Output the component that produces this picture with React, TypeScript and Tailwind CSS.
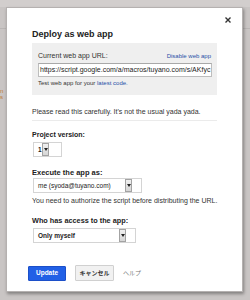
import React from 'react';

const font = { fontFamily: '"Liberation Sans", Arial, "Noto Sans CJK JP", sans-serif' };

const Arrow: React.FC = () => (
  <svg width="4" height="3" viewBox="0 0 4 3">
    <path d="M0 0 L4 0 L2 3 Z" fill="#222" />
  </svg>
);

const Select: React.FC<{ box: string; text: string; label: string; bold?: boolean }> = ({ box, text, label, bold }) => (
  <div className={`ml-[1px] flex h-[15px] border border-[#d4d4d4] bg-white ${box}`}>
    <span className={`${text} pl-[4px] text-[6.5px] leading-[13px] whitespace-nowrap text-[#222] ${bold ? 'font-bold' : ''}`}>
      {label}
    </span>
    <div className="flex w-[7px] items-center justify-center border border-[#a3a3a3] bg-gradient-to-b from-[#f0f0f0] to-[#d6d6d6]">
      <Arrow />
    </div>
  </div>
);

export default function App() {
  return (
    <div className="relative h-[300px] w-[250px] overflow-hidden bg-[#c9c5c4]" style={font}>
      {/* page behind the dialog */}
      <div className="absolute left-0 top-0 h-[7px] w-full bg-[#d2cecd]" />
      <div className="absolute left-0 top-[28px] h-[1px] w-full bg-[#b9b5b4]" />
      <div className="absolute left-0 top-[88px] text-[6px] leading-[6px] text-[#c07a35]">n<br />s</div>

      <div className="relative ml-[6px] mt-[7px] h-[285px] w-[237px] border border-[#b5b1b0] bg-white px-[25px] pt-[20px] shadow-[1px_2px_3px_rgba(0,0,0,0.35)]">
        <svg className="absolute right-[11px] top-[9px]" width="6" height="6" viewBox="0 0 6 6">
          <path d="M0.5 0.5 L5.5 5.5 M5.5 0.5 L0.5 5.5" stroke="#333" strokeWidth="1.4" />
        </svg>

        <div className="text-[9px] font-bold leading-[12px] text-[#222]">Deploy as web app</div>

        <div className="mt-[3px] bg-[#efefef] pb-[7px] pl-[6px] pr-[5px] pt-[8px]">
          <div className="flex h-[10px] items-center justify-between">
            <span className="text-[7px] text-[#333]">Current web app URL:</span>
            <span className="mr-[1px] text-[6px] text-[#1f4fa8]">Disable web app</span>
          </div>
          <div className="mt-[2px] h-[14px] overflow-hidden border border-[#bdbdbd] border-t-[#a8a8a8] bg-white px-[1px] text-[7px] leading-[12px] whitespace-nowrap text-[#222]">
            https://script.google.com/a/macros/tuyano.com/s/AKfyc
          </div>
          <div className="mt-[1px] text-[6px] leading-[10px] text-[#333]">
            Test web app for your <span className="text-[#1f4fa8]">latest code.</span>
          </div>
        </div>

        <div className="mt-[12px] text-[7px] leading-[10px] text-[#333]">
          Please read this carefully. It's not the usual yada yada.
        </div>
        <div className="mt-[3px] h-[1px] bg-[#ebebeb]" />

        <div className="mt-[9px] text-[7px] font-bold leading-[10px] text-[#222]">Project version:</div>
        <div className="mt-[2px]">
          <Select box="w-[29px]" text="w-[8px]" label="1" bold />
        </div>

        <div className="mt-[11px] text-[7.5px] font-bold leading-[10px] text-[#222]">Execute the app as:</div>
        <div>
          <Select box="w-[109px]" text="w-[91px]" label="me (syoda@tuyano.com)" />
        </div>
        <div className="mt-[3px] text-[7px] leading-[10px] whitespace-nowrap text-[#333]">
          You need to authorize the script before distributing the URL.
        </div>

        <div className="mt-[10px] text-[7.3px] font-bold leading-[10px] text-[#222]">Who has access to the app:</div>
        <div className="mt-[2px]">
          <Select box="w-[103px]" text="w-[85px]" label="Only myself" bold />
        </div>

        <div className="-ml-[4px] mt-[22px] flex items-center">
          <div className="flex h-[15px] w-[38px] items-center justify-center rounded-[1px] border border-[#1c4fc9] bg-[#2160e6] text-[6.5px] font-bold text-white">
            Update
          </div>
          <div className="ml-[9px] flex h-[16px] w-[39px] items-center justify-center rounded-[1px] border border-[#d0d0d0] bg-[#f1f1f1] text-[6px] font-bold text-[#333]">
            キャンセル
          </div>
          <span className="ml-[9px] text-[6px] text-[#777]">ヘルプ</span>
        </div>
      </div>
    </div>
  );
}
